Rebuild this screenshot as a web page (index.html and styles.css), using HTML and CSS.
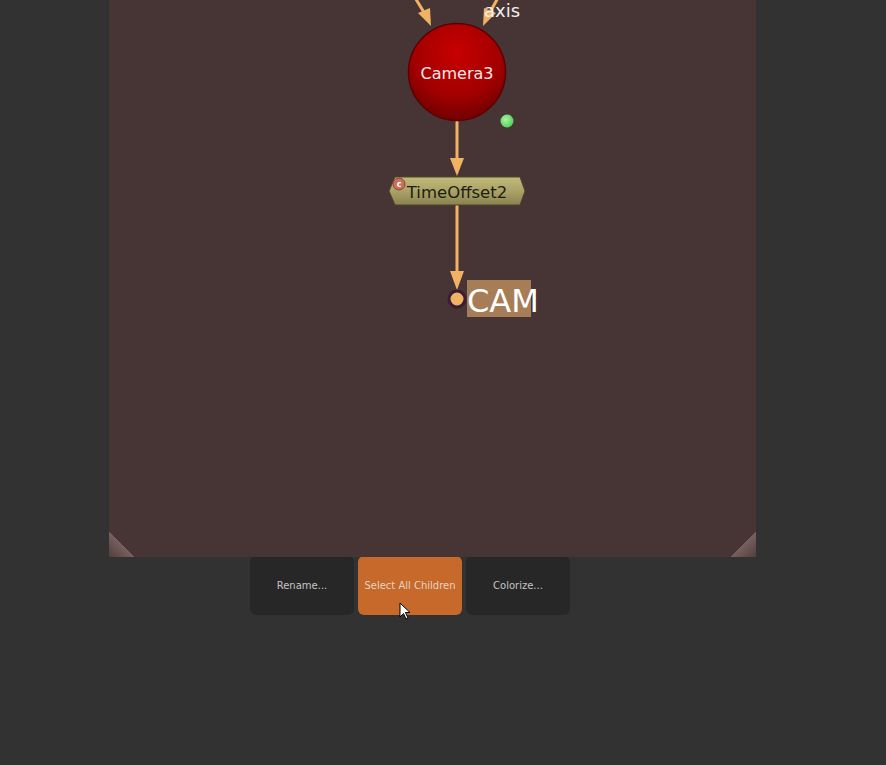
FILE: index.html
```html
<!DOCTYPE html>
<html>
<head>
<meta charset="utf-8">
<link rel="stylesheet" href="styles.css">
</head>
<body>
<div class="page">
  <div class="canvas">
    <svg class="graph" width="647" height="557" viewBox="109 0 647 557" xmlns="http://www.w3.org/2000/svg">
      <defs>
        <radialGradient id="red" cx="50%" cy="30%" r="65%">
          <stop offset="0" stop-color="#c80000"/>
          <stop offset="0.7" stop-color="#a20000"/>
          <stop offset="1" stop-color="#7a0000"/>
        </radialGradient>
        <linearGradient id="olive" x1="0" y1="0" x2="0" y2="1">
          <stop offset="0" stop-color="#c2bb7c"/>
          <stop offset="0.5" stop-color="#aaa266"/>
          <stop offset="1" stop-color="#8a8250"/>
        </linearGradient>
        <radialGradient id="green" cx="40%" cy="40%" r="60%">
          <stop offset="0" stop-color="#a8f5a0"/>
          <stop offset="1" stop-color="#58d060"/>
        </radialGradient>
      </defs>
      <g stroke="#f2b263" stroke-width="3" fill="#f2b263" stroke-linecap="round">
        <line x1="414" y1="-4" x2="425" y2="14"/>
        <polygon stroke="none" points="431,26 418,13 430,8"/>
        <line x1="499" y1="-4" x2="489" y2="14"/>
        <polygon stroke="none" points="483,26 484,8 496,13"/>
        <line x1="457" y1="122" x2="457" y2="160"/>
        <polygon stroke="none" points="457,176 450,158 464,158"/>
        <line x1="457" y1="206" x2="457" y2="273"/>
        <polygon stroke="none" points="457,290 450,271 464,271"/>
      </g>
      <text x="484" y="17" class="axis">axis</text>
      <circle cx="457" cy="72" r="48.5" fill="url(#red)" stroke="#5e0000" stroke-width="1.5"/>
      <text x="457" y="79" class="cam3" text-anchor="middle">Camera3</text>
      <circle cx="507" cy="121" r="6.5" fill="url(#green)"/>
      <polygon points="395,177 520,177 525,191 520,205 395,205 389,191" fill="url(#olive)" stroke="#4c4626" stroke-width="1"/>
      <text x="457" y="198" class="toff" text-anchor="middle">TimeOffset2</text>
      <circle cx="399" cy="184" r="6" fill="#c8705a" stroke="#8c4434" stroke-width="1"/>
      <text x="399" y="187" class="badge" text-anchor="middle">c</text>
      <circle cx="457" cy="299" r="8" fill="#f2b263" stroke="#3a1c34" stroke-width="3"/>
      <rect x="467" y="280" width="64" height="37" fill="#a67d57"/>
      <text x="467" y="312" class="camlabel">CAM</text>
    </svg>
    <div class="corner left"></div>
    <div class="corner right"></div>
  </div>
  <div class="buttons">
    <div class="btn">Rename...</div>
    <div class="btn active">Select All Children</div>
    <div class="btn">Colorize...</div>
  </div>
  <svg class="cursor" width="14" height="20" viewBox="0 0 14 20" xmlns="http://www.w3.org/2000/svg">
    <path d="M1 1 L1 15 L4.5 11.5 L7 17 L9 16 L6.5 10.5 L11 10.5 Z" fill="#ffffff" stroke="#000000" stroke-width="1"/>
  </svg>
</div>
</body>
</html>
```
FILE: styles.css
```css
html, body {
  margin: 0;
  padding: 0;
  background: #323232;
  width: 886px;
  height: 765px;
  overflow: hidden;
  font-family: "DejaVu Sans", Verdana, sans-serif;
}
.page {
  position: relative;
  width: 886px;
  height: 765px;
}
.canvas {
  position: relative;
  margin-left: 109px;
  width: 647px;
  height: 557px;
  background: #463534;
  overflow: hidden;
}
.graph {
  display: block;
}
.axis {
  font-family: "DejaVu Sans", sans-serif;
  font-size: 18px;
  fill: #f0eeee;
}
.cam3 {
  font-family: "DejaVu Sans", sans-serif;
  font-size: 16px;
  fill: #f4eaea;
}
.toff {
  font-family: "DejaVu Sans", sans-serif;
  font-size: 16.5px;
  fill: #1e1c12;
}
.badge {
  font-family: "DejaVu Sans", sans-serif;
  font-size: 8px;
  font-weight: bold;
  fill: #ffffff;
}
.camlabel {
  font-family: "DejaVu Sans", sans-serif;
  font-size: 32px;
  fill: #ffffff;
}
.corner {
  position: absolute;
  bottom: 0;
  width: 26px;
  height: 26px;
}
.corner.left {
  left: 0;
  background: linear-gradient(to top right, rgba(110,90,90,0.25) 0%, rgba(170,140,140,0.5) 49%, transparent 50%);
}
.corner.right {
  right: 0;
  background: linear-gradient(to top left, rgba(110,90,90,0.25) 0%, rgba(170,140,140,0.5) 49%, transparent 50%);
}
.buttons {
  display: flex;
  gap: 4px;
  margin-left: 250px;
  margin-top: -1px;
}
.btn {
  width: 104px;
  height: 59px;
  border-radius: 6px;
  background: #272727;
  color: #c4c4c4;
  font-size: 10px;
  display: flex;
  align-items: center;
  justify-content: center;
}
.btn.active {
  background: #c6692b;
  color: #e6d2c2;
}
.cursor {
  position: absolute;
  left: 399px;
  top: 602px;
}
```
